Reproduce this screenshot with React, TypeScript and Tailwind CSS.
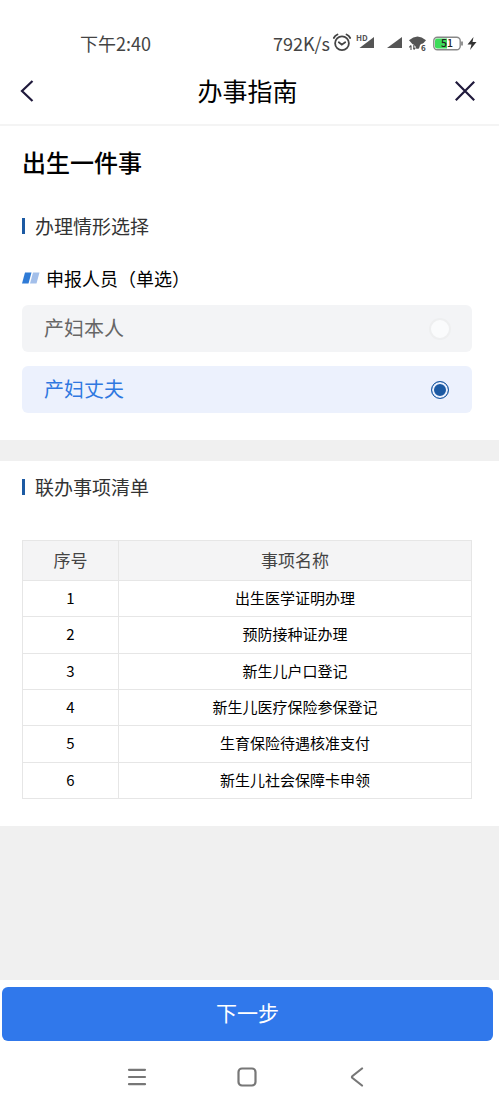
import { useState } from "react";

const people = ["产妇本人", "产妇丈夫"];

const items = [
  "出生医学证明办理",
  "预防接种证办理",
  "新生儿户口登记",
  "新生儿医疗保险参保登记",
  "生育保险待遇核准支付",
  "新生儿社会保障卡申领",
];

function StatusBar() {
  return (
    <div className="flex h-[58px] items-center justify-between pt-7 pr-[21px] pl-20 text-lg leading-7 text-[#444]">
      <span>下午2:40</span>
      <div className="flex items-center">
        <span>792K/s</span>
        <svg className="ml-0.5" width="146" height="20" viewBox="0 0 146 20" aria-hidden="true">
          <g fill="none" stroke="#444" strokeWidth="1.8" strokeLinecap="round">
            <circle cx="10" cy="10.3" r="6.9" />
            <path d="M6.8 9.300l3 2.400 3.400-2.400M1.800 5Q3 2.500 5.500 1.500M18.200 5Q17 2.500 14.500 1.500" />
          </g>
          <g fill="#555">
            <path d="M42 4V15H27.500Z" />
            <path d="M70 4V15H55Z" />
            <path d="M77 7.200Q85.500 0 94 7.200L86.500 15.800H84.500Z" />
            <circle cx="91.500" cy="14.500" r="4" fill="#fff" />
            <path d="M76 11.500h5.500l2.500 2.500V18h-8Z" fill="#fff" />
          </g>
          <path d="M79 12.500V17M77.300 14.300L79 12.500M81.800 12V16.500M83.500 14.700L81.800 16.500" fill="none" stroke="#555" strokeWidth="1.100" />
          <path d="M24 0h12.500v5.500L33 9H24Z" fill="#fff" />
          <text x="24" y="7.500" fontSize="8" fontWeight="700" fill="#555">HD</text>
          <text x="89" y="17.500" fontSize="8" fontWeight="700" fill="#444">6</text>
          <rect x="101.800" y="4.300" width="26.400" height="12.400" rx="3.500" fill="#fff" stroke="#888" strokeWidth="1.400" />
          <path d="M105 5.500H115V15.500H105Q103 15.500 103 13.500V7.500Q103 5.500 105 5.500Z" fill="#3ddc5a" />
          <path d="M130 8.500v4" stroke="#888" strokeWidth="1.800" />
          <text x="109" y="14.300" fontSize="10.500" fontWeight="500" fill="#222">51</text>
          <path d="M141.500 4L135.500 11.500H139.500L138 17L144.500 9H140.500Z" fill="#333" />
        </svg>
      </div>
    </div>
  );
}

function SectionTitle({ children }: { children: string }) {
  return (
    <h2 className="flex items-center gap-2.5 text-[19px] leading-7 text-[#333]">
      <span className="h-4 w-[3px] bg-[#1c5aa3]" />
      {children}
    </h2>
  );
}

export default function App() {
  const [selected, setSelected] = useState("产妇丈夫");

  return (
    <div className="flex min-h-screen flex-col bg-white pr-0.5 font-['Noto_Sans_CJK_SC',sans-serif] text-black">
      <StatusBar />

      <header className="grid h-[68px] grid-cols-[1fr_auto_1fr] items-center border-b-2 border-[#f4f4f4] pr-6 pl-5">
        <button type="button" aria-label="返回" className="justify-self-start">
          <svg width="14" height="24" viewBox="0 0 14 24" fill="none" stroke="#201a3c" strokeWidth="2.200">
            <path d="M12.500 2L2 12L12.500 22" />
          </svg>
        </button>
        <h1 className="pb-0.5 text-[25px] leading-9">办事指南</h1>
        <button type="button" aria-label="关闭" className="justify-self-end">
          <svg width="20" height="20" viewBox="0 0 20 20" fill="none" stroke="#201a3c" strokeWidth="2.200">
            <path d="M0.800 0.800L19.200 19.200M19.200 0.800L0.800 19.200" />
          </svg>
        </button>
      </header>

      <main className="flex flex-1 flex-col bg-[#f0f0f0]">
        <section className="bg-white pt-[18px] pr-[27px] pb-[27px] pl-[22px]">
          <p className="text-2xl leading-9 font-medium">出生一件事</p>
          <div className="mt-8">
            <SectionTitle>办理情形选择</SectionTitle>
          </div>
          <fieldset className="mt-6">
            <legend className="flex items-center gap-1.5 text-lg leading-7">
              <svg width="18" height="12" viewBox="0 0 18 12" aria-hidden="true">
                <path d="M3 0.500H9.500L6.500 11.500H0Z" fill="#2f7bd6" />
                <path d="M11 0.500H17.500L14.500 11.500H8Z" fill="#a3bfea" />
              </svg>
              申报人员（单选）
            </legend>
            <div className="mt-[13px] flex flex-col gap-[14px]">
              {people.map((name) => (
                <label
                  key={name}
                  className="flex h-[47px] items-center justify-between rounded-md bg-[#f3f4f6] pr-[21px] pl-[22px] text-xl text-[#666] has-checked:bg-[#ecf1fd] has-checked:text-[#2f78e0]"
                >
                  <span className="pb-0.5">{name}</span>
                  <span className="grid size-[22px] place-items-center">
                    <input
                      type="radio"
                      name="applicant"
                      checked={selected === name}
                      onChange={() => setSelected(name)}
                      className="size-[22px] appearance-none rounded-full border-2 border-[#eeeff0] bg-[#fafbfc] checked:size-[18px] checked:border checked:border-[#1c5aa3] checked:bg-[#1c5aa3] checked:shadow-[inset_0_0_0_2px_#ecf1fd]"
                    />
                  </span>
                </label>
              ))}
            </div>
          </fieldset>
        </section>

        <section className="mt-[21px] bg-white pt-3 pr-[27px] pb-[27px] pl-[22px]">
          <SectionTitle>联办事项清单</SectionTitle>
          <table className="mt-[39px] h-[259px] w-full border-collapse text-center">
            <thead>
              <tr className="h-10 bg-[#f4f4f5] text-[17px] text-[#444]">
                <th className="w-24 border border-[#e6e6e6] pb-0.5 font-normal">序号</th>
                <th className="border border-[#e6e6e6] pb-0.5 font-normal">事项名称</th>
              </tr>
            </thead>
            <tbody>
              {items.map((item, i) => (
                <tr key={item} className="h-9 text-[15px]">
                  <td className="border border-[#e6e6e6] pb-px">{i + 1}</td>
                  <td className="border border-[#e6e6e6] pb-px">{item}</td>
                </tr>
              ))}
            </tbody>
          </table>
        </section>
      </main>

      <footer className="pt-[7px]">
        <div className="pr-1.5 pl-0.5">
          <button type="button" className="h-[54px] w-full rounded-md bg-[#3078eb] pb-0.5 text-[21px] text-white">
            下一步
          </button>
        </div>
        <nav className="flex h-[58px] items-center justify-center gap-[90px] pt-3.5 pr-1.5">
          <button type="button" aria-label="最近任务">
            <svg width="20" height="20" viewBox="0 0 20 20" stroke="#777" strokeWidth="2.200" strokeLinecap="round">
              <path d="M2 2.800H18M2 10H18M2 17.200H18" />
            </svg>
          </button>
          <button type="button" aria-label="主屏幕">
            <svg width="20" height="20" viewBox="0 0 20 20" fill="none" stroke="#777" strokeWidth="2.200">
              <rect x="1.500" y="1.500" width="17" height="17" rx="3.500" />
            </svg>
          </button>
          <button type="button" aria-label="系统返回">
            <svg width="20" height="20" viewBox="0 0 20 20" fill="none" stroke="#777" strokeWidth="2.200" strokeLinecap="round" strokeLinejoin="round">
              <path d="M15 1.500L5.500 9Q4.500 10 5.500 11L15 18.500" />
            </svg>
          </button>
        </nav>
      </footer>
    </div>
  );
}
